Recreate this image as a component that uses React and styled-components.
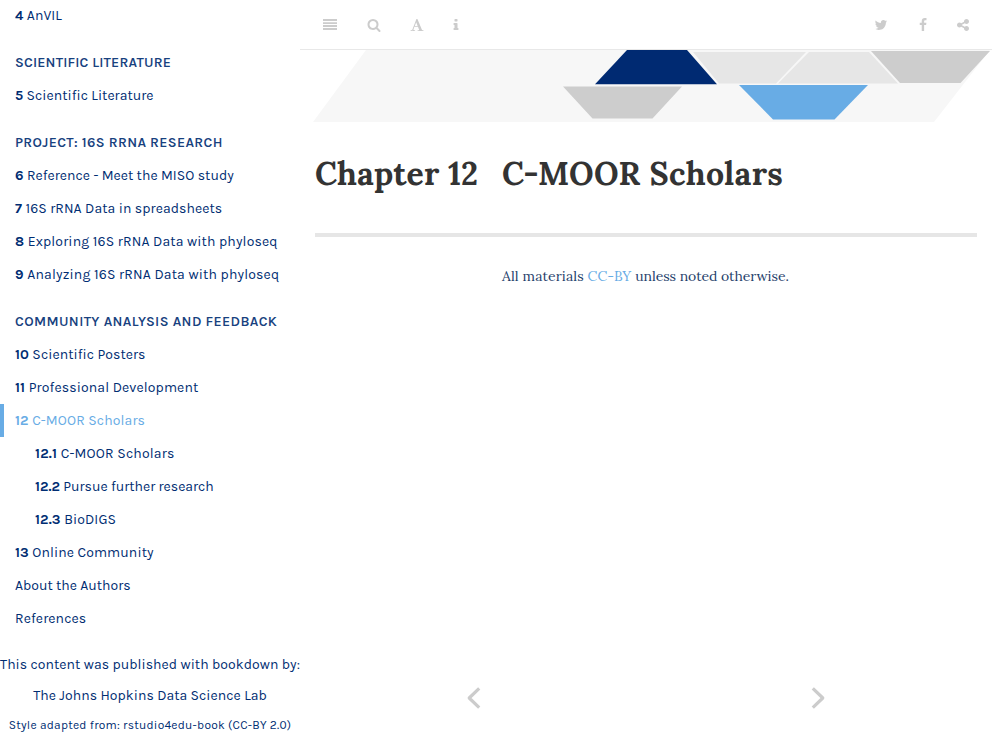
import React from 'react';
import styled, { createGlobalStyle } from 'styled-components';

const GlobalStyle = createGlobalStyle`
  * { box-sizing: border-box; }
  body { margin: 0; background: #fff; overflow: hidden; }
  a { color: inherit; text-decoration: none; }
`;

const Page = styled.div`
  display: flex;
  height: 744px;
`;

const Sidebar = styled.nav`
  flex: 0 0 300px;
  font: 14px/33px Karla, Inter, 'Liberation Sans', sans-serif;
  color: #002d72;
  white-space: nowrap;
`;

const NavList = styled.ul`
  list-style: none;
  margin: -1px 0 0;
  padding: 0;
`;

const NavHeading = styled.li`
  height: 33px;
  margin-top: 14px;
  padding-left: 15px;
  font-weight: 650;
  letter-spacing: ${(p) => p.$spacing}px;
  text-transform: uppercase;
  opacity: 0.9;
`;

const NavItem = styled.li`
  height: 33px;
  padding-left: ${(p) => (p.$nested ? 35 : p.$active ? 11 : 15)}px;
  border-left: ${(p) => (p.$active ? '4px solid #68ace5' : 'none')};
  color: ${(p) => (p.$active ? '#68ace5' : 'inherit')};
  letter-spacing: ${(p) => p.$spacing}px;
`;

const ChapterNumber = styled.b`
  font-weight: 700;
`;

const Credits = styled.footer`
  margin-top: 14px;
  text-align: center;
`;

const CreditLine = styled.div`
  height: ${(p) => (p.$small ? 29 : 31)}px;
  line-height: ${(p) => (p.$small ? 29 : 31)}px;
  font-size: ${(p) => (p.$small ? 12 : 14)}px;
  letter-spacing: ${(p) => (p.$small ? 0.24 : 0.04)}px;
`;

const Main = styled.main`
  flex: 1;
  min-width: 0;
  display: flex;
  flex-direction: column;
`;

const Toolbar = styled.header`
  flex: 0 0 50px;
  display: flex;
  justify-content: space-between;
  padding: 18px 22px 0 23px;
  border-bottom: 1px solid #e8e8e8;
  color: #ccc;
`;

const ToolGroup = styled.div`
  display: flex;
`;

const Glyph = styled.svg`
  width: 14px;
  height: 14px;
  margin-left: ${(p) => p.$gap || 0}px;
  fill: currentColor;
`;

const Banner = styled.svg`
  display: block;
  flex: 0 0 72px;
  width: 692px;
  height: 72px;
`;

const Article = styled.article`
  flex: 1;
  padding: 0 15px;
  font-family: Lora, 'Liberation Serif', serif;
`;

const Title = styled.h1`
  display: grid;
  grid-template-columns: 187px 1fr;
  height: 115px;
  margin: 0;
  padding-top: 31px;
  border-bottom: 4px solid #e6e6e6;
  font-size: 32px;
  line-height: 42px;
  font-weight: 700;
  letter-spacing: 0.3px;
  color: #333;
`;

const TitleNumber = styled.span`
  letter-spacing: 0.1px;
`;

const License = styled.p`
  margin: 27px 0 0 187px;
  font-size: 14px;
  line-height: 24px;
  letter-spacing: 0.12px;
  color: #1f3f6b;
`;

const LicenseLink = styled.a`
  && { color: #68ace5; }
`;

const LicenseTail = styled.span`
  letter-spacing: -0.06px;
`;

const Pager = styled.div`
  display: flex;
  justify-content: space-between;
  height: 58px;
  padding: 0 166px;
`;

const Arrow = styled.svg`
  width: 16px;
  height: 24px;
  fill: none;
  stroke: #ccc;
  stroke-width: 3.2;
  stroke-linejoin: round;
`;

const ICONS = {
  search: 'M1216 832q0-185-131.5-316.5t-316.5-131.5-316.5 131.5-131.5 316.5 131.5 316.5 316.5 131.5 316.5-131.5 131.5-316.5zm512 832q0 52-38 90t-90 38q-54 0-90-38l-343-342q-179 124-399 124-143 0-273.5-55.5t-225-150-150-225-55.5-273.5 55.5-273.5 150-225 225-150 273.5-55.5 273.5 55.5 225 150 150 225 55.5 273.5q0 220-124 399l343 343q37 37 37 90z',
  font: 'M789 559l-170 450q33 0 136.5 2t160.5 2q19 0 57-2-87-253-184-452zm-725 1105l2-79q23-7 56-12.5t57-10.5 49.5-14.5 44.5-29 31-50.5l237-616 280-724h128q8 14 11 21l205 480q33 78 106 257.5t114 274.5q15 34 58 144.5t72 168.5q20 45 35 57 19 15 88 29.5t84 20.5q6 38 6 57 0 5-.5 13.5t-.5 12.5q-63 0-190-8t-191-8q-76 0-215 7t-178 8q0-43 4-78l131-28q1 0 12.5-2.5t15.5-3.5 14.5-4.5 15-6.5 11-8 9-11 2.5-14q0-16-31-96.5t-72-177.5-42-100l-450-2q-26 58-76.5 195.5t-50.5 162.5q0 22 14 37.5t43.5 24.5 48.5 13.5 57 8.5 41 4q1 19 1 58 0 9-2 27-58 0-174.5-10t-174.5-10q-8 0-26.5 4t-21.5 4q-80 14-188 14z',
  info: 'M1216 1344v128q0 26-19 45t-45 19h-512q-26 0-45-19t-19-45v-128q0-26 19-45t45-19h64v-384h-64q-26 0-45-19t-19-45v-128q0-26 19-45t45-19h384q26 0 45 19t19 45v576h64q26 0 45 19t19 45zm-128-1152v192q0 26-19 45t-45 19h-256q-26 0-45-19t-19-45v-192q0-26 19-45t45-19h256q26 0 45 19t19 45z',
  twitter: 'M1684 408q-67 98-162 167 1 14 1 42 0 130-38 259.5t-115.5 248.5-184.5 210.5-258 146-323 54.5q-271 0-496-145 35 4 78 4 225 0 401-138-105-2-188-64.5t-114-159.5q33 5 61 5 43 0 85-11-112-23-185.5-111.5t-73.5-205.5v-4q68 38 146 41-66-44-105-115t-39-154q0-88 44-163 121 149 294.5 238.5t371.5 99.5q-8-38-8-74 0-134 94.5-228.5t228.5-94.5q140 0 236 102 109-21 205-78-37 115-142 178 93-10 186-50z',
  facebook: 'M1343 12v264h-157q-86 0-116 36t-30 108v189h293l-39 296h-254v759h-306v-759h-255v-296h255v-218q0-186 104-288.5t277-102.5q147 0 228 12z',
  share: 'M1344 1024q133 0 226.5 93.5t93.5 226.5-93.5 226.5-226.5 93.5-226.5-93.5-93.5-226.5q0-12 2-34l-360-180q-92 86-218 86-133 0-226.5-93.5t-93.5-226.5 93.5-226.5 226.5-93.5q126 0 218 86l360-180q-2-22-2-34 0-133 93.5-226.5t226.5-93.5 226.5 93.5 93.5 226.5-93.5 226.5-226.5 93.5q-126 0-218-86l-360 180q2 22 2 34t-2 34l360 180q92-86 218-86z',
};

const Icon = ({ name, gap }) => (
  <Glyph viewBox="0 0 1792 1792" $gap={gap}><path d={ICONS[name]} /></Glyph>
);

// ls: letter spacing in px
const ITEMS = [
  { n: '4', t: 'AnVIL', ls: 0.06 },
  { h: 'Scientific Literature', ls: 0.18 },
  { n: '5', t: 'Scientific Literature', ls: 0.03 },
  { h: 'Project: 16S rRNA Research', ls: 0.34 },
  { n: '6', t: 'Reference - Meet the MISO study', ls: 0.03 },
  { n: '7', t: '16S rRNA Data in spreadsheets', ls: 0.07 },
  { n: '8', t: 'Exploring 16S rRNA Data with phyloseq', ls: 0.14 },
  { n: '9', t: 'Analyzing 16S rRNA Data with phyloseq', ls: 0.16 },
  { h: 'Community Analysis and Feedback', ls: 0.37 },
  { n: '10', t: 'Scientific Posters', ls: 0.06 },
  { n: '11', t: 'Professional Development', ls: 0.12 },
  { n: '12', t: 'C-MOOR Scholars', ls: 0.12, active: true },
  { n: '12.1', t: 'C-MOOR Scholars', ls: 0.18, nested: true },
  { n: '12.2', t: 'Pursue further research', ls: 0, nested: true },
  { n: '12.3', t: 'BioDIGS', ls: 0.12, nested: true },
  { n: '13', t: 'Online Community', ls: 0.09 },
  { t: 'About the Authors', ls: 0 },
  { t: 'References', ls: 0.1 },
];

export default function App() {
  return (
    <Page>
      <GlobalStyle />
      <Sidebar>
        <NavList>
          {ITEMS.map((i) =>
            i.h ? (
              <NavHeading key={i.h} $spacing={i.ls}>{i.h}</NavHeading>
            ) : (
              <NavItem key={(i.n || '') + i.t} $active={i.active} $nested={i.nested} $spacing={i.ls}>
                <a href="#">{i.n && <><ChapterNumber>{i.n}</ChapterNumber> </>}{i.t}</a>
              </NavItem>
            )
          )}
        </NavList>
        <Credits>
          <CreditLine>This content was published with bookdown by:</CreditLine>
          <CreditLine>The Johns Hopkins Data Science Lab</CreditLine>
          <CreditLine $small>Style adapted from: rstudio4edu-book (CC-BY 2.0)</CreditLine>
        </Credits>
      </Sidebar>
      <Main>
        <Toolbar>
          <ToolGroup>
            <Glyph viewBox="0 0 14 14">
              <path d="M0 1h14v2H0zM0 4.2h14v1.8H0zM0 7h14v2H0zM0 10h14v2H0z" />
            </Glyph>
            <Icon name="search" gap={29.7} />
            <Icon name="font" gap={29.3} />
            <Icon name="info" gap={25.5} />
          </ToolGroup>
          <ToolGroup>
            <Icon name="twitter" />
            <Icon name="facebook" gap={28} />
            <Icon name="share" gap={26} />
          </ToolGroup>
        </Toolbar>
        <Banner viewBox="300 50 692 72">
          <path fill="#f7f7f7" d="M366 50H990L934 122H313z" />
          <path fill="#e6e6e6" d="M693 52H806L776 83.500H719zM809 52H869L898 83.500H778z" />
          <path fill="#cdcdcd" d="M871 51H990L960.500 83H900zM563 86.500H682L652.500 118.500H592.500z" />
          <path fill="#002a72" d="M627 50H687L717 84.300H595z" />
          <path fill="#68ace5" d="M739 85H868L834.500 119.500H773z" />
        </Banner>
        <Article>
          <Title><TitleNumber>Chapter 12</TitleNumber><span>C-MOOR Scholars</span></Title>
          <License>
            All materials <LicenseLink href="#">CC-BY</LicenseLink> <LicenseTail>unless noted otherwise.</LicenseTail>
          </License>
        </Article>
        <Pager>
          <Arrow viewBox="0 0 16 24"><path d="M13.200 2.300L3.200 12l10 9.700" /></Arrow>
          <Arrow viewBox="0 0 16 24"><path d="M2.800 2.300L12.800 12l-10 9.700" /></Arrow>
        </Pager>
      </Main>
    </Page>
  );
}
